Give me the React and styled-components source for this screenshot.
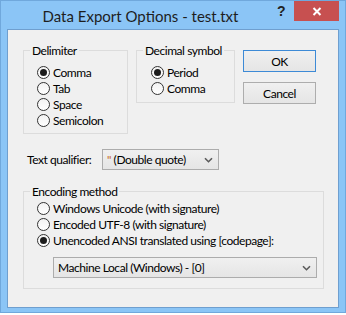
import React from 'react';
import styled, { createGlobalStyle } from 'styled-components';

const GlobalStyle = createGlobalStyle`
  html, body {
    margin: 0;
    padding: 0;
    background: #ffffff;
  }
  body {
    font-family: Lato, "Liberation Sans", sans-serif;
    font-size: 12px;
    letter-spacing: -0.45px;
    color: #000;
  }
`;

const Window = styled.div`
  width: 346px;
  height: 313px;
  box-sizing: border-box;
  display: flex;
  flex-direction: column;
  padding: 0 6px 4px 6px;
  background: #8bc5f6;
  border: 1px solid #70a8dc;
`;

const TitleBar = styled.div`
  height: 28px;
  display: flex;
  align-items: flex-start;
`;

const Title = styled.div`
  flex: 1;
  padding-left: 6px;
  text-align: center;
  font-size: 15px;
  letter-spacing: 0;
  line-height: 30px;
  color: #1e1e1e;
  white-space: nowrap;
`;

const HelpButton = styled.div`
  width: 26px;
  height: 20px;
  display: flex;
  align-items: center;
  justify-content: center;
  font-family: "Liberation Sans", sans-serif;
  font-weight: bold;
  font-size: 14px;
  color: #222;
`;

const CloseButton = styled.div`
  width: 45px;
  height: 20px;
  display: flex;
  align-items: center;
  justify-content: center;
  background: #c75050;
`;

const Panel = styled.div`
  flex: 1;
  box-sizing: border-box;
  border: 1px solid #6f9fcf;
  background: #f0f0f0;
  padding: 13px 0 0 15px;
`;

const TopRow = styled.div`
  display: flex;
  align-items: flex-start;
  gap: 8px;
`;

const Group = styled.fieldset`
  margin: 0;
  padding: 0;
  width: ${p => p.$width}px;
  box-sizing: border-box;
  border: 1px solid #dcdcdc;
  min-inline-size: 0;
`;

const Legend = styled.legend`
  margin-left: 6px;
  padding: 0 2px;
  line-height: 15px;
`;

const RadioList = styled.div`
  display: flex;
  flex-direction: column;
  padding: ${p => p.$padTop}px 0 ${p => p.$padBottom}px ${p => p.$padLeft}px;
`;

const RadioRow = styled.label`
  display: flex;
  align-items: center;
  height: 16px;
  gap: 3px;
  white-space: nowrap;
`;

const RadioMark = styled.span`
  width: 13px;
  height: 13px;
  box-sizing: border-box;
  flex-shrink: 0;
  border-radius: 50%;
  border: 1px solid #333;
  background: linear-gradient(#f2f2f2, #ffffff);
  display: flex;
  align-items: center;
  justify-content: center;

  &::after {
    content: '';
    width: 7px;
    height: 7px;
    border-radius: 50%;
    background: #1c1c1c;
    display: ${p => (p.$checked ? 'block' : 'none')};
  }
`;

const ButtonColumn = styled.div`
  display: flex;
  flex-direction: column;
  gap: 10px;
  margin-top: 7px;
`;

const Button = styled.div`
  width: 73px;
  height: 22px;
  box-sizing: border-box;
  display: flex;
  align-items: center;
  justify-content: center;
  border: 1px solid ${p => (p.$primary ? '#3d8ad6' : '#adadad')};
  background: linear-gradient(#f0f0f0, #e5e5e5);
`;

const QualifierRow = styled.div`
  display: flex;
  align-items: center;
  margin-top: 15px;
`;

const FieldLabel = styled.span`
  width: 75px;
  margin-left: 4px;
  white-space: nowrap;
`;

const Combo = styled.div`
  width: ${p => p.$width}px;
  height: 21px;
  box-sizing: border-box;
  margin: ${p => p.$top || 0}px 0 0 ${p => p.$indent || 0}px;
  display: flex;
  align-items: center;
  justify-content: space-between;
  padding: 0 5px 0 4px;
  border: 1px solid #acacac;
  background: linear-gradient(#f0f0f0, #e5e5e5);
  white-space: nowrap;
`;

const Quote = styled.span`
  color: #c8641e;
`;

const EncodingGroup = styled(Group)`
  margin-top: 14px;
`;

const EncodingBody = styled.div`
  padding: 1px 0 10px 13px;
`;

const Chevron = () => (
  <svg width="9" height="6" viewBox="0 0 9 6">
    <path d="M1 1.2 L4.5 4.7 L8 1.2" fill="none" stroke="#5a5a5a" strokeWidth="1.6" />
  </svg>
);

const CloseIcon = () => (
  <svg width="10" height="9" viewBox="0 0 10 9">
    <path d="M1.5 1 L8.5 8 M8.5 1 L1.5 8" stroke="#fff" strokeWidth="2" />
  </svg>
);

const Radio = ({ checked, children }) => (
  <RadioRow>
    <RadioMark $checked={checked} />
    {children}
  </RadioRow>
);

export default function App() {
  return (
    <>
      <GlobalStyle />
      <Window>
        <TitleBar>
          <Title>Data Export Options - test.txt</Title>
          <HelpButton>?</HelpButton>
          <CloseButton>
            <CloseIcon />
          </CloseButton>
        </TitleBar>
        <Panel>
          <TopRow>
            <Group $width={105}>
              <Legend>Delimiter</Legend>
              <RadioList $padTop={6} $padBottom={5} $padLeft={13}>
                <Radio checked>Comma</Radio>
                <Radio>Tab</Radio>
                <Radio>Space</Radio>
                <Radio>Semicolon</Radio>
              </RadioList>
            </Group>
            <Group $width={99}>
              <Legend>Decimal symbol</Legend>
              <RadioList $padTop={6} $padBottom={6} $padLeft={14}>
                <Radio checked>Period</Radio>
                <Radio>Comma</Radio>
              </RadioList>
            </Group>
            <ButtonColumn>
              <Button $primary>OK</Button>
              <Button>Cancel</Button>
            </ButtonColumn>
          </TopRow>

          <QualifierRow>
            <FieldLabel>Text qualifier:</FieldLabel>
            <Combo $width={117}>
              <span>
                <Quote>"</Quote> (Double quote)
              </span>
              <Chevron />
            </Combo>
          </QualifierRow>

          <EncodingGroup $width={301}>
            <Legend>Encoding method</Legend>
            <EncodingBody>
              <Radio>Windows Unicode (with signature)</Radio>
              <Radio>Encoded UTF-8 (with signature)</Radio>
              <Radio checked>Unencoded ANSI translated using [codepage]:</Radio>
              <Combo $width={264} $indent={16} $top={9}>
                <span>Machine Local (Windows) - [0]</span>
                <Chevron />
              </Combo>
            </EncodingBody>
          </EncodingGroup>
        </Panel>
      </Window>
    </>
  );
}
